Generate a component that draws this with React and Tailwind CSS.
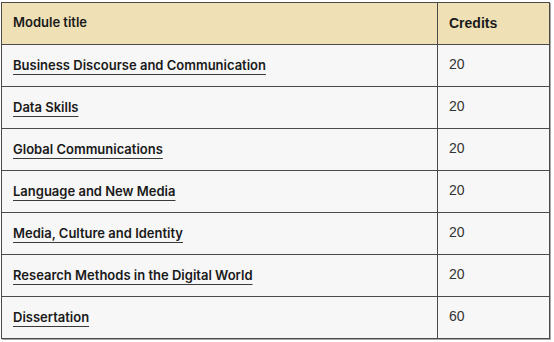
export default function App() {
  const rows = [
    ["Business Discourse and Communication", "20"],
    ["Data Skills", "20"],
    ["Global Communications", "20"],
    ["Language and New Media", "20"],
    ["Media, Culture and Identity", "20"],
    ["Research Methods in the Digital World", "20"],
    ["Dissertation", "60"],
  ];
  return (
    <div className="w-[554px] h-[342px] bg-white pt-[2px] pl-[1px]">
      <table className="w-[548px] border-collapse bg-[#f7f7f7] shadow-[1px_1px_0_#a8a8a8] table-fixed">
        <colgroup>
          <col className="w-[436px]" />
          <col className="w-[112px]" />
        </colgroup>
        <thead>
          <tr className="h-[42px] bg-[#efe0b5]">
            <th className="border border-[#4a4a4a] text-left pl-[11px] pb-[1px] font-semibold text-[13px] text-[#1a1a1a] font-['Inter',sans-serif]">
              Module title
            </th>
            <th className="border border-[#4a4a4a] text-left pl-[11px] pb-[1px] font-bold text-[14px] text-[#1a1a1a] font-['Liberation_Sans',sans-serif]">
              Credits
            </th>
          </tr>
        </thead>
        <tbody>
          {rows.map(([t, c]) => (
            <tr key={t} className="h-[42px]">
              <td className="border border-[#4a4a4a] pl-[11px] pb-[3px]">
                <span className="font-semibold text-[13px] text-[#1a1a1a] font-['Inter',sans-serif] underline decoration-[#3a3a3a] decoration-1 underline-offset-[4px]">
                  {t}
                </span>
              </td>
              <td className="border border-[#4a4a4a] pl-[11px] pb-[3px] text-[14px] text-[#333] font-['Liberation_Sans',sans-serif]">
                {c}
              </td>
            </tr>
          ))}
        </tbody>
      </table>
    </div>
  );
}
